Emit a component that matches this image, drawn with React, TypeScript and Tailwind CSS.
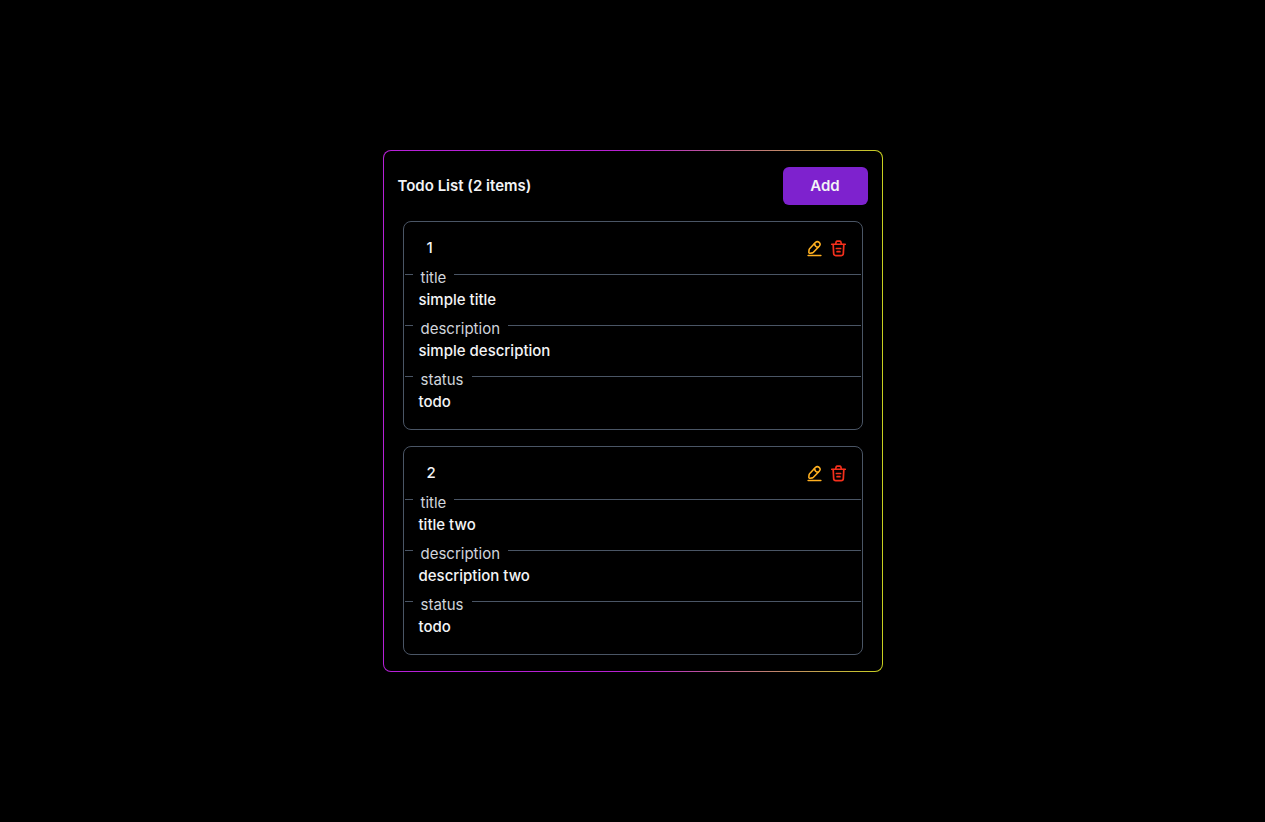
type Todo = { id: number; title: string; description: string; status: string };

const todos: Todo[] = [
  { id: 1, title: "simple title", description: "simple description", status: "todo" },
  { id: 2, title: "title two", description: "description two", status: "todo" },
];

function EditIcon() {
  return (
    <svg viewBox="0 0 24 24" className="size-[17px]" fill="none" stroke="currentColor" strokeWidth="2.2" strokeLinecap="round" strokeLinejoin="round" aria-hidden="true">
      <path d="M13.26 3.6 5.05 12.29c-.31.33-.61.98-.67 1.43l-.37 3.24c-.13 1.17.71 1.97 1.87 1.77l3.22-.55c.45-.08 1.08-.41 1.39-.75l8.21-8.69c1.42-1.5 2.06-3.21-.15-5.3-2.2-2.07-3.87-1.34-5.29.16Z" />
      <path d="M11.89 5.05a6.126 6.126 0 0 0 5.45 5.15" />
      <path d="M3 22h18" />
    </svg>
  );
}

function TrashIcon() {
  return (
    <svg viewBox="0 0 24 24" className="size-[17px]" fill="none" stroke="currentColor" strokeWidth="2.4" strokeLinecap="round" strokeLinejoin="round" aria-hidden="true">
      <path d="M2.5 6h19" />
      <path d="m8 5.5.7-2.8C9 1.9 9.6 1.5 10.4 1.5h3.2c.8 0 1.4.4 1.7 1.2L16 5.5" />
      <path d="m19.5 6.5-.7 12.7c-.1 1.7-.8 2.8-3 2.8H8.2c-2.200 0-2.900-1.100-3-2.800L4.500 6.500" />
      <path d="M9 12h6M10 16.500h4" />
    </svg>
  );
}

function Field({ label, value }: { label: string; value: string }) {
  return (
    <div>
      <dt className="flex h-2 items-start gap-2 font-normal leading-2 text-gray-300">
        <span className="w-2 border-t border-gray-600" />
        <span>{label}</span>
        <span className="flex-1 border-t border-gray-600" />
      </dt>
      <dd className="px-3.5 pt-1.5 pb-[13px] leading-6">{value}</dd>
    </div>
  );
}

function TodoCard({ todo }: { todo: Todo }) {
  return (
    <li className="rounded-lg border border-gray-600 px-px pb-0.5">
      <div className="flex h-[52px] items-center justify-between pr-3.5 pl-[22px]">
        <span>{todo.id}</span>
        <div className="flex gap-[7px] pt-px">
          <button type="button" aria-label="Edit" className="cursor-pointer text-[#ffb020]">
            <EditIcon />
          </button>
          <button type="button" aria-label="Delete" className="cursor-pointer text-[#f5301c]">
            <TrashIcon />
          </button>
        </div>
      </div>
      <dl>
        <Field label="title" value={todo.title} />
        <Field label="description" value={todo.description} />
        <Field label="status" value={todo.status} />
      </dl>
    </li>
  );
}

export default function App() {
  return (
    <main className="flex min-h-screen items-center justify-center bg-black font-['Inter',sans-serif] text-[15px] font-medium text-gray-100">
      <section className="w-full max-w-[500px] rounded-lg bg-linear-to-r/srgb from-[#b620d8] via-[#b620d0] to-[#c8d020] p-px">
        <div className="rounded-[7px] bg-black px-3.5 py-4">
          <header className="flex items-center justify-between">
            <h1 className="font-semibold">Todo List ({todos.length} items)</h1>
            <button type="button" className="h-[38px] w-[85px] cursor-pointer rounded-md bg-[#7e22ce] font-semibold">
              Add
            </button>
          </header>
          <ul className="mt-4 flex flex-col gap-4 px-[5px]">
            {todos.map((todo) => (
              <TodoCard key={todo.id} todo={todo} />
            ))}
          </ul>
        </div>
      </section>
    </main>
  );
}
